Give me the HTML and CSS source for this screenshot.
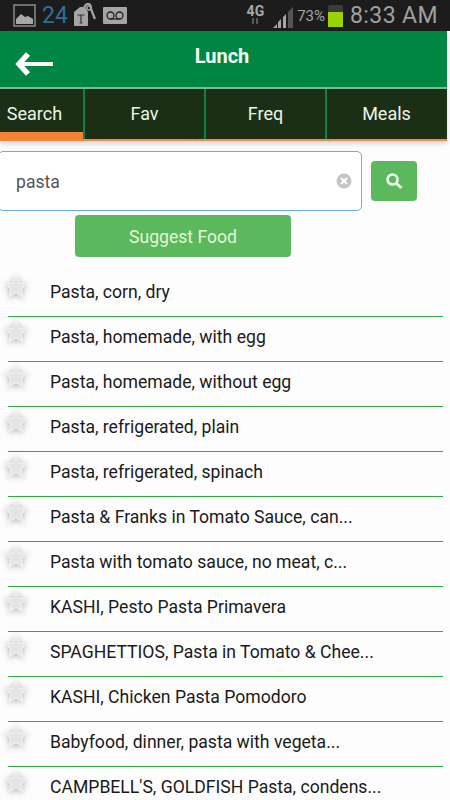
FILE: index.html

```html
<!DOCTYPE html>
<html lang="en">
<head>
    <meta charset="UTF-8">
    <meta name="viewport" content="width=device-width, initial-scale=1.0">
    <title>Lunch</title>
    <link rel="stylesheet" href="styles.css">
</head>
<body>

    <div class="status-bar">
        <div class="status-left">
            <svg class="ic-picture" width="24" height="24" viewBox="0 0 24 24">
                <rect x="1" y="1" width="21" height="21" fill="none" stroke="#8a8a8a" stroke-width="1.5"/>
                <path d="M3 20 V15 L8 10 L12 13 L15 12 L20 15 V20 Z" fill="#a8a8a8"/>
            </svg>
            <span class="status-count">24</span>
            <svg class="ic-tag" width="22" height="24" viewBox="0 0 22 24">
                <path d="M0 9 L6 4 H11 L14 9 V22 Q14 23 13 23 H1 Q0 23 0 22 Z" fill="#a5a5a5"/>
                <path d="M10 5 Q12 0 15 1 Q17 2 17 6 L21 16" fill="none" stroke="#a5a5a5" stroke-width="2.2"/>
                <circle cx="15" cy="5" r="2" fill="none" stroke="#a5a5a5" stroke-width="1.5"/>
                <path d="M3.500 12 H10.500 M7 12 V20 M5.500 20 H8.500" stroke="#333" stroke-width="1.200" fill="none"/>
            </svg>
            <svg class="ic-voicemail" width="24" height="17" viewBox="0 0 24 17">
                <rect width="24" height="17" rx="1" fill="#a5a5a5"/>
                <circle cx="7.500" cy="8.500" r="3.500" fill="none" stroke="#222" stroke-width="1.300"/>
                <circle cx="16.500" cy="8.500" r="3.500" fill="none" stroke="#222" stroke-width="1.300"/>
                <path d="M7.500 12 H16.500" stroke="#222" stroke-width="1.300"/>
            </svg>
        </div>
        <div class="status-right">
            <div class="network">
                <span>4G</span>
                <svg width="10" height="6" viewBox="0 0 10 6"><path d="M3 0 V6 M7 0 V6" stroke="#5a5a5a" stroke-width="2"/></svg>
            </div>
            <svg class="ic-signal" width="21" height="22" viewBox="0 0 21 22">
                <path d="M0 22 L4 18 V22 Z M5 22 V16 L8 13 V22 Z M10 22 V11 L13 8 V22 Z" fill="#a5a5a5"/>
                <path d="M15 22 V6 L20 1 V22 Z" fill="#555"/>
            </svg>
            <span class="battery-text">73%</span>
            <div class="battery"><div class="battery-fill"></div></div>
            <span class="clock">8:33 AM</span>
        </div>
    </div>

    <div class="main-column">
        <div class="top-header">
            <svg class="back-arrow" width="38" height="26" viewBox="0 0 38 26">
                <path d="M13 3 L4 13 L13 23" fill="none" stroke="#fff" stroke-width="5.500"/>
                <path d="M6 13 H38" fill="none" stroke="#fff" stroke-width="4"/>
            </svg>
            <h1>Lunch</h1>
        </div>

        <div class="tabs">
            <div class="tab tab-active">Search</div>
            <div class="tab">Fav</div>
            <div class="tab">Freq</div>
            <div class="tab">Meals</div>
        </div>
    </div>

    <div class="search-row">
        <div class="search-box">
            <span class="search-value">pasta</span>
            <svg class="clear-icon" width="16" height="16" viewBox="0 0 16 16">
                <circle cx="8" cy="8" r="7.500" fill="#c4c4c4"/>
                <path d="M5 5 L11 11 M11 5 L5 11" stroke="#fff" stroke-width="2.200"/>
            </svg>
        </div>
        <button class="search-btn">
            <svg width="18" height="18" viewBox="0 0 18 18">
                <circle cx="7.500" cy="7.500" r="5" fill="none" stroke="#f2fbe9" stroke-width="2.600"/>
                <path d="M11.500 11.500 L16.500 16" stroke="#f2fbe9" stroke-width="3"/>
            </svg>
        </button>
    </div>

    <button class="suggest-btn">Suggest Food</button>

    <ul class="food-list" id="food-list"></ul>

    <script>
        let foods = [
            "Pasta, corn, dry",
            "Pasta, homemade, with egg",
            "Pasta, homemade, without egg",
            "Pasta, refrigerated, plain",
            "Pasta, refrigerated, spinach",
            "Pasta & Franks in Tomato Sauce, can...",
            "Pasta with tomato sauce, no meat, c...",
            "KASHI, Pesto Pasta Primavera",
            "SPAGHETTIOS, Pasta in Tomato & Chee...",
            "KASHI, Chicken Pasta Pomodoro",
            "Babyfood, dinner, pasta with vegeta...",
            "CAMPBELL'S, GOLDFISH Pasta, condens..."
        ];

        let star = '<svg class="star" width="24" height="25" viewBox="0 0 24 25">' +
            '<path d="M12 2.500 L15 9 L22 10 L17 15 L18.500 22 L12 18.500 L5.500 22 L7 15 L2 10 L9 9 Z" fill="#e4e4e4" stroke="#efefef" stroke-width="1.500"/>' +
            '</svg>';

        let list = document.getElementById("food-list");
        foods.forEach(function (food) {
            let row = document.createElement("li");
            row.className = "food-row";
            row.innerHTML = star + '<span class="food-name"></span>';
            row.querySelector(".food-name").textContent = food;
            list.appendChild(row);
        });
    </script>

</body>
</html>
```

FILE: styles.css

```css
html, body {
    margin: 0;
    padding: 0;
}
body {
    width: 450px;
    height: 800px;
    overflow: hidden;
    background: #fdfdfd;
    font-family: Roboto, sans-serif;
}
.status-bar {
    height: 31px;
    background: #1c1c1c;
    display: flex;
    justify-content: space-between;
    align-items: center;
    padding: 0 12px 0 13px;
}
.status-left, .status-right {
    display: flex;
    align-items: center;
}
.status-count {
    margin-left: 5px;
    font-size: 23px;
    color: #2f6f9b;
}
.ic-tag {
    margin-left: 6px;
    margin-top: -1px;
}
.ic-voicemail {
    margin-left: 7px;
}
.network {
    display: flex;
    flex-direction: column;
    align-items: center;
    font-size: 14px;
    font-weight: bold;
    line-height: 13px;
    color: #a8a8a8;
    margin-top: -3px;
}
.ic-signal {
    margin-left: 9px;
    margin-top: 3px;
}
.battery-text {
    margin-left: 3px;
    font-size: 15px;
    color: #a5a5a5;
}
.battery {
    margin-left: 3px;
    width: 15px;
    height: 22px;
    background: #3b3b3b;
    border-radius: 2px 2px 0 0;
    display: flex;
    align-items: flex-end;
}
.battery-fill {
    width: 15px;
    height: 15px;
    background: #9bd300;
}
.clock {
    margin-left: 7px;
    font-size: 23px;
    letter-spacing: 0.4px;
    color: #a0a0a0;
}
.main-column {
    width: 447px;
    box-shadow: 0 3px 5px rgba(0, 0, 0, 0.15);
}
.top-header {
    height: 56px;
    background: #008542;
    border-bottom: 2px solid #7fb892;
    position: relative;
    display: flex;
    align-items: center;
    justify-content: center;
}
.top-header h1 {
    margin: 0 3px 7px 0;
    font-size: 20px;
    font-weight: bold;
    color: #f4fff4;
}
.back-arrow {
    position: absolute;
    left: 15px;
    top: 20px;
}
.tabs {
    display: flex;
    height: 52px;
    background: #1b2f16;
    border-bottom: 2px solid #ee8a4f;
    box-sizing: border-box;
}
.tab {
    box-sizing: border-box;
    width: 121px;
    padding-top: 14px;
    text-align: center;
    font-size: 18px;
    color: #eef5e8;
    border-left: 2px solid #0f8046;
}
.tab-active {
    width: 83px;
    border-left: 0;
    padding-right: 14px;
    border-bottom: 8px solid #f58232;
    margin-bottom: -1px;
}
.search-row {
    display: flex;
    align-items: center;
    margin: 10px 0 0 -2px;
}
.search-box {
    position: relative;
    box-sizing: border-box;
    width: 364px;
    height: 60px;
    background: #fff;
    border: 1px solid #6cade0;
    border-radius: 5px;
    padding: 20px 0 0 17px;
    font-size: 17.600px;
    color: #555;
}
.clear-icon {
    position: absolute;
    right: 9px;
    top: 21px;
}
.search-btn {
    margin-left: 9px;
    width: 46px;
    height: 40px;
    padding: 3px 0 0 0;
    border: none;
    border-radius: 4px;
    background: #5cb85c;
}
.suggest-btn {
    display: block;
    margin: 4px 0 0 75px;
    width: 216px;
    height: 42px;
    padding: 2px 0 0 0;
    border: none;
    border-radius: 4px;
    background: #5cb85c;
    color: #e3f7d5;
    font-family: Roboto, sans-serif;
    font-size: 17.600px;
}
.food-list {
    list-style: none;
    margin: 15px 0 0 0;
    padding: 0;
}
.food-row {
    box-sizing: border-box;
    height: 45px;
    margin: 0 7px 0 8px;
    border-bottom: 1px solid #27ae3c;
    display: flex;
    align-items: flex-start;
    font-size: 17.600px;
    color: #1a1a1a;
}
.star {
    flex: none;
    margin: 2px 0 0 -4px;
    filter: drop-shadow(0 1px 3px rgba(0, 0, 0, 0.3));
}
.food-name {
    margin: 10px 0 0 22px;
    white-space: nowrap;
}
```
